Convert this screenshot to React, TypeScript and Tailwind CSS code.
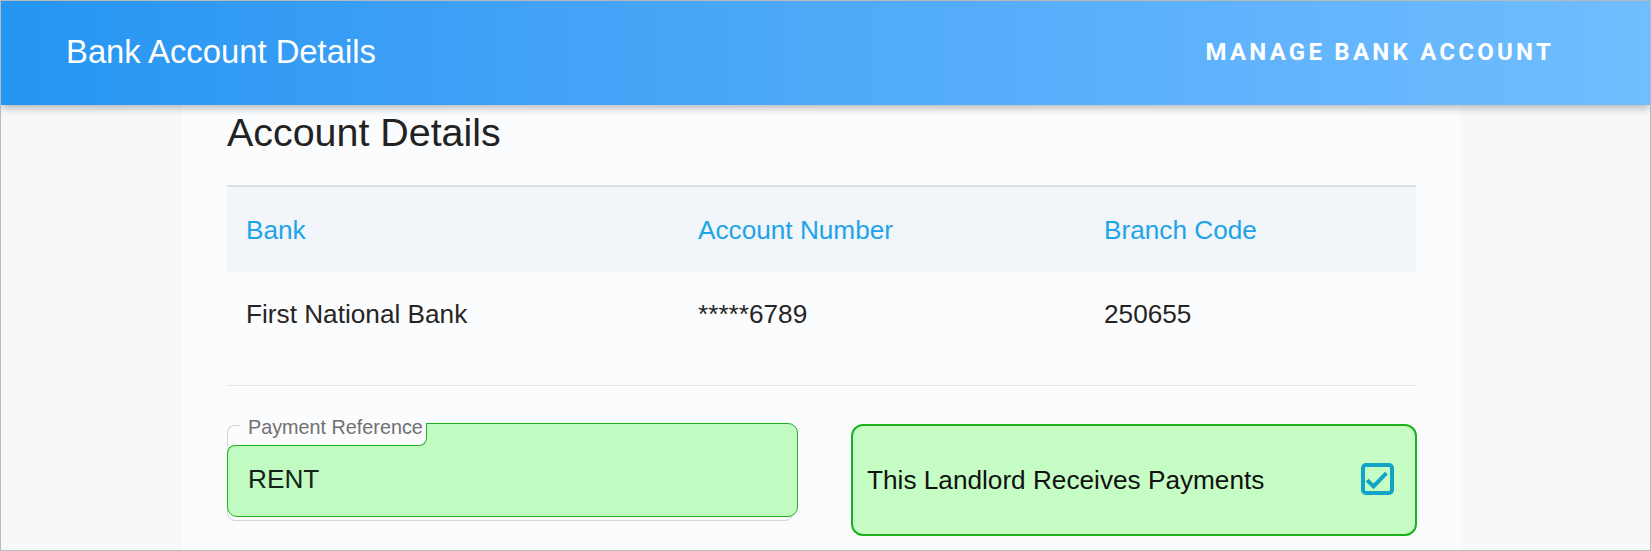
/**
 * Bank account details: the blue bar, then one card — the account table, and beneath it the
 * payment reference field and the "receives payments" switch, both highlighted green.
 */

const GREEN = "border-[#1fb01f]";

export default function App() {
  return (
    <div className="h-[551px] w-[1651px] overflow-hidden border border-[#b9b9b9] bg-[#f7f8fa] font-['Liberation_Sans',Arial,sans-serif]">
      <header className="relative z-10 flex h-[104px] items-center justify-between bg-gradient-to-r from-[#2495f2] to-[#70bdff] pb-[3px] pl-[65px] pr-[96px] shadow-[0_3px_8px_rgba(0,0,0,0.28)]">
        <h1 className="text-[32.8px] text-white">Bank Account Details</h1>
        <button className="font-['Roboto',sans-serif] text-[24px] font-bold uppercase tracking-[0.135em] text-white">
          Manage Bank Account
        </button>
      </header>

      <main className="ml-[181px] h-[446px] w-[1279px] bg-[#fbfcfd] px-[45px]">
        <h2 className="pt-[4px] text-[39.4px] leading-[46px] text-[#222]">Account Details</h2>

        <AccountTable />

        <hr className="mt-[29px] border-[#e2e3e5]" />

        <div className="mt-[30px] grid grid-cols-[571px_566px] items-start gap-x-[53px]">
          <PaymentReference value="RENT" />
          <ReceivesPayments />
        </div>
      </main>
    </div>
  );
}

/* ---- The pieces --------------------------------------------------------------------------------- */

const COLS = "grid grid-cols-[452px_406px_332px]";

function AccountTable() {
  return (
    <div className="mt-[30px] border-t-2 border-[#dcdcdc] text-[26.2px] leading-[30px]">
      <div className={`${COLS} h-[85px] items-center bg-[#f2f5f9] px-[19px] text-[#1ea4ea]`}>
        <div>Bank</div>
        <div>Account Number</div>
        <div>Branch Code</div>
      </div>
      <div className={`${COLS} h-[84px] items-center px-[19px] text-[#252525]`}>
        <div>First National Bank</div>
        <div>*****6789</div>
        <div>250655</div>
      </div>
    </div>
  );
}

/** The outlined field, with the green highlight cut round its label. */
function PaymentReference({ value }: { value: string }) {
  return (
    <div className="relative h-[105px]">
      {/* the field's own outline */}
      <div className="absolute top-[9px] right-[5px] bottom-0 left-0 rounded-[8px] border border-[#d4d4d4]" />
      {/* the highlight */}
      <div className={`absolute top-[7px] right-0 bottom-[4px] left-0 rounded-[10px] border ${GREEN} bg-[#c2fbc2]`} />
      {/* the notch round the label */}
      <div className={`absolute top-[7px] left-0 h-[23px] w-[200px] rounded-br-[8px] border-r border-b ${GREEN} bg-[#fbfcfd]`} />
      <div className="absolute top-[29px] left-0 size-[9px] bg-[#fbfcfd]" />
      <div className={`absolute top-[29px] left-0 size-[12px] rounded-tl-[8px] border-t border-l ${GREEN} bg-[#c2fbc2]`} />
      <div className="absolute top-[9px] left-0 h-[21px] w-[13px] rounded-tl-[8px] border-t border-l border-[#d4d4d4]" />

      <span className="absolute top-[-1px] left-[21px] text-[19.8px] leading-[24px] text-[#707070]">Payment Reference</span>
      <span className="absolute top-[48px] left-[21px] text-[26.2px] leading-[30px] text-[#14231a]">{value}</span>
    </div>
  );
}

function ReceivesPayments() {
  return (
    <label className={`mt-[8px] flex h-[112px] items-center justify-between rounded-[12px] border-2 ${GREEN} bg-[#c5fdc5] pr-[20px] pl-[14px]`}>
      <span className="text-[26.2px] leading-[30px] text-[#111]">This Landlord Receives Payments</span>
      <svg width="34" height="34" viewBox="0 0 34 34" fill="none" className="text-[#12a4c6]">
        <rect x="2" y="2" width="29" height="28" rx="3" stroke="currentColor" strokeWidth="4" />
        <path d="M7.5 18.5 12.5 23.5 24 11.5" stroke="currentColor" strokeWidth="4" strokeLinecap="square" />
      </svg>
    </label>
  );
}
